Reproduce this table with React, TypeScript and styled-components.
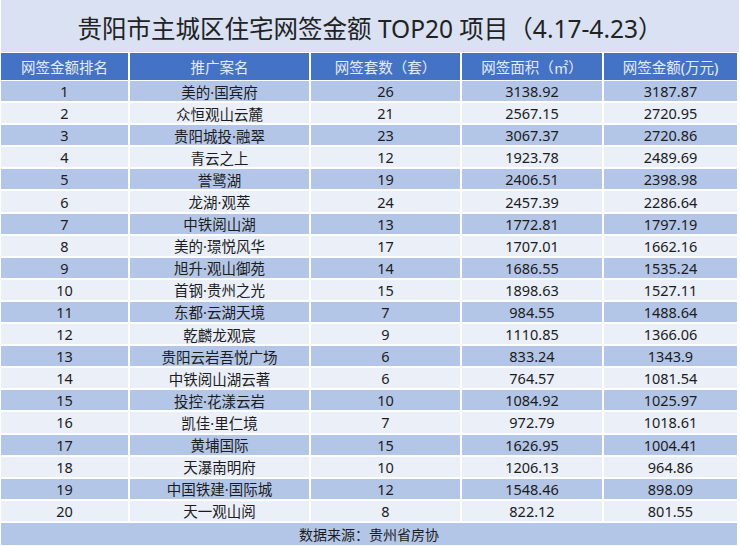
import React from 'react'
import styled, { createGlobalStyle } from 'styled-components'

const GlobalStyle = createGlobalStyle`
  html, body {
    margin: 0;
    padding: 0;
    background: #fff;
  }
  body {
    font-family: "Noto Sans", "Noto Sans CJK SC", sans-serif;
  }
`

type Row = [string, string, string, string, string]

const rows: Row[] = [
  ['1', '美的·国宾府', '26', '3138.92', '3187.87'],
  ['2', '众恒观山云麓', '21', '2567.15', '2720.95'],
  ['3', '贵阳城投·融翠', '23', '3067.37', '2720.86'],
  ['4', '青云之上', '12', '1923.78', '2489.69'],
  ['5', '誉鹭湖', '19', '2406.51', '2398.98'],
  ['6', '龙湖·观萃', '24', '2457.39', '2286.64'],
  ['7', '中铁阅山湖', '13', '1772.81', '1797.19'],
  ['8', '美的·璟悦风华', '17', '1707.01', '1662.16'],
  ['9', '旭升·观山御苑', '14', '1686.55', '1535.24'],
  ['10', '首钢·贵州之光', '15', '1898.63', '1527.11'],
  ['11', '东都·云湖天境', '7', '984.55', '1488.64'],
  ['12', '乾麟龙观宸', '9', '1110.85', '1366.06'],
  ['13', '贵阳云岩吾悦广场', '6', '833.24', '1343.9'],
  ['14', '中铁阅山湖云著', '6', '764.57', '1081.54'],
  ['15', '投控·花漾云岩', '10', '1084.92', '1025.97'],
  ['16', '凯佳·里仁境', '7', '972.79', '1018.61'],
  ['17', '黄埔国际', '15', '1626.95', '1004.41'],
  ['18', '天瀑南明府', '10', '1206.13', '964.86'],
  ['19', '中国铁建·国际城', '12', '1548.46', '898.09'],
  ['20', '天一观山阅', '8', '822.12', '801.55'],
]

const headers = ['网签金额排名', '推广案名', '网签套数（套）', '网签面积（㎡）', '网签金额(万元)']

const App = () => {
  return (
    <>
      <GlobalStyle />
      <Sheet>
        <Title>贵阳市主城区住宅网签金额 TOP20 项目（4.17-4.23）</Title>
        <Table>
          {headers.map((h) => (
            <HeadCell key={h}>{h}</HeadCell>
          ))}
          {rows.map((r, i) =>
            r.map((v, j) => (
              <Cell key={`${i}-${j}`} odd={i % 2 === 0}>
                {v}
              </Cell>
            ))
          )}
          <Footer>数据来源：贵州省房协</Footer>
        </Table>
      </Sheet>
    </>
  )
}

export default App

const Sheet = styled.div`
  width: 740px;
  height: 546px;
  padding: 0 1px;
  box-sizing: border-box;
  display: flex;
  flex-direction: column;
  gap: 1px;
  background: #fff;
`

const Title = styled.div`
  height: 52px;
  background: #d9e1f2;
  color: #222;
  font-size: 24.5px;
  display: flex;
  align-items: center;
  justify-content: center;
  padding-top: 2px;
  box-sizing: border-box;
  white-space: nowrap;
`

const Table = styled.div`
  display: grid;
  grid-template-columns: 127px 179px 149px 140px 133px;
  grid-template-rows: 26px repeat(20, 20.1px) 22px;
  column-gap: 2px;
  row-gap: 2px;
`

const HeadCell = styled.div`
  background: #4472c4;
  color: #e4ebf7;
  font-size: 14.5px;
  display: flex;
  align-items: center;
  justify-content: center;
  white-space: nowrap;
  margin-bottom: -1px;
`

const Cell = styled.div<{ odd?: boolean }>`
  background: ${(p) => (p.odd ? '#b4c6e7' : '#eaeff8')};
  color: #1c1c1c;
  font-size: 14.5px;
  display: flex;
  align-items: center;
  justify-content: center;
  white-space: nowrap;
`

const Footer = styled.div`
  grid-column: 1 / -1;
  background: #b4c6e7;
  color: #1c1c1c;
  font-size: 14px;
  display: flex;
  align-items: center;
  justify-content: center;
`
